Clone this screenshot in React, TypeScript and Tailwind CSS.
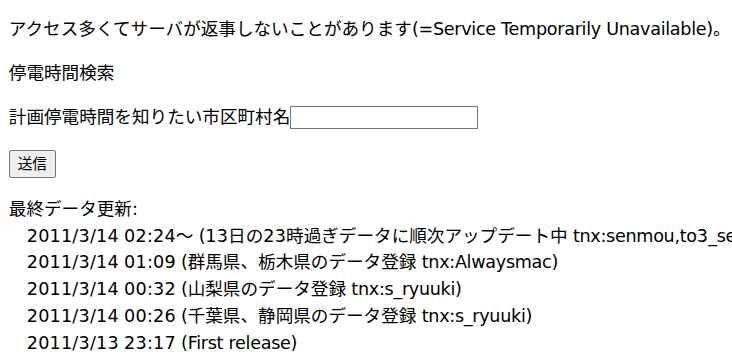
import { Fragment } from "react"

// Meiryo-ish rendering: wide Verdana-like Latin, tighter letters, roomier digits
function Mixed({ text }: { text: string }) {
  const parts = text.match(/[0-9/:]+|[A-Za-z_(),=:.\s]+|[^\x00-\x7f]+/g) ?? []
  return (
    <>
      {parts.map((p, i) => {
        if (/^[0-9/:]+$/.test(p)) {
          return (
            <span key={i} className="tracking-[0.2px]">
              {p}
            </span>
          )
        }
        if (/^[\x00-\x7f]+$/.test(p)) {
          return (
            <span key={i} className="tracking-[-0.3px]">
              {p}
            </span>
          )
        }
        return <Fragment key={i}>{p}</Fragment>
      })}
    </>
  )
}

const updates = [
  "2011/3/14 02:24～ (13日の23時過ぎデータに順次アップデート中 tnx:senmou,to3_set)",
  "2011/3/14 01:09 (群馬県、栃木県のデータ登録 tnx:Alwaysmac)",
  "2011/3/14 00:32 (山梨県のデータ登録 tnx:s_ryuuki)",
  "2011/3/14 00:26 (千葉県、静岡県のデータ登録 tnx:s_ryuuki)",
  "2011/3/13 23:17 (First release)",
]

export default function App() {
  return (
    <div className="h-[360px] w-[732px] overflow-hidden bg-white px-[8.8px] pt-[15.7px] text-[17.6px] leading-[26.7px] text-black [font-family:'DejaVu_Sans','Noto_Sans_CJK_JP',sans-serif]">
      <p className="whitespace-nowrap">
        <Mixed text="アクセス多くてサーバが返事しないことがあります(=Service Temporarily Unavailable)。" />
      </p>
      <p className="mt-[17.3px]">停電時間検索</p>
      <form className="mt-[17.8px]" onSubmit={(e) => e.preventDefault()}>
        <p className="flex items-center">
          計画停電時間を知りたい市区町村名
          <input
            type="text"
            className="h-[23px] w-[188px] border border-[#767676] bg-white px-1 text-[14px] outline-none"
          />
        </p>
        <button
          type="submit"
          className="mt-[19.6px] h-[28px] w-[47px] rounded-[2px] border border-[#767676] bg-[#efefef] text-[14.67px] leading-none text-black"
        >
          送信
        </button>
      </form>
      <div className="mt-[17.6px]">
        <p>
          <Mixed text="最終データ更新:" />
        </p>
        <ul className="pl-[18px]">
          {updates.map((u) => (
            <li key={u} className="whitespace-nowrap">
              <Mixed text={u} />
            </li>
          ))}
        </ul>
      </div>
    </div>
  )
}
